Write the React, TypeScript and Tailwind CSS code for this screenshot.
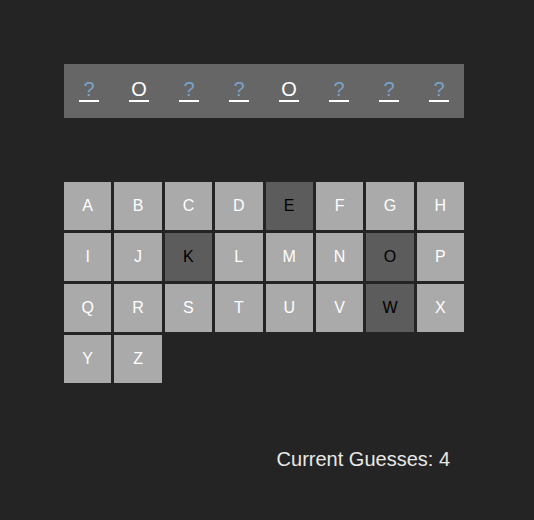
const WORD = ["", "O", "", "", "O", "", "", ""];
const LETTERS = "ABCDEFGHIJKLMNOPQRSTUVWXYZ".split("");
const USED = new Set(["E", "K", "O", "W"]);
const GUESSES = 4;

function Word() {
  return (
    <section aria-label="Word" className="grid grid-cols-8 justify-items-center bg-[#666666] py-4">
      {WORD.map((letter, i) => (
        <span
          key={i}
          className={`h-[22px] w-5 border-b-2 border-white text-center text-xl leading-[18px] ${
            letter ? "text-white" : "text-[#7ba3cb]"
          }`}
        >
          {letter || "?"}
        </span>
      ))}
    </section>
  );
}

function Keyboard() {
  return (
    <section aria-label="Letters" className="mt-16 grid grid-cols-8 gap-[3px]">
      {LETTERS.map((letter) => (
        <button
          key={letter}
          type="button"
          disabled={USED.has(letter)}
          className="h-12 bg-[#aaaaaa] text-center text-base text-white disabled:bg-[#5c5c5c] disabled:text-black"
        >
          {letter}
        </button>
      ))}
    </section>
  );
}

export default function App() {
  return (
    <div className="min-h-screen bg-[#242424] p-16 font-['Liberation_Sans',Arial,sans-serif] text-[#e8e8e8]">
      <main className="max-w-[400px]">
        <Word />
        <Keyboard />
        <p className="mt-16 pr-3.5 text-right text-xl leading-6">Current Guesses: {GUESSES}</p>
      </main>
    </div>
  );
}
